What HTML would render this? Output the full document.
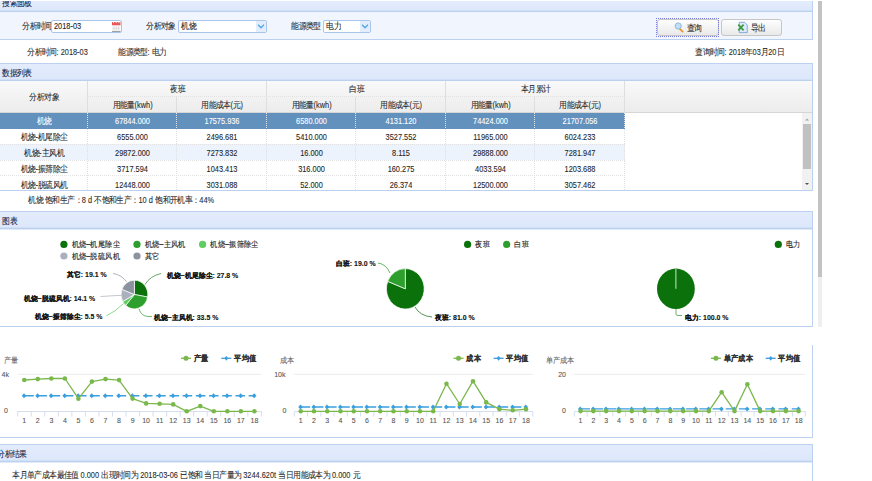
<!DOCTYPE html>
<html><head><meta charset="utf-8">
<style>
*{margin:0;padding:0;box-sizing:border-box}
html,body{width:872px;height:481px;overflow:hidden;background:#fff}
body{position:relative;font-family:"Liberation Sans",sans-serif;font-size:7.4px;color:#2a2a2a;-webkit-text-stroke:0.08px currentColor}
.a{position:absolute;white-space:nowrap;line-height:9px}
.hd{position:absolute;left:-1px;width:814px;height:18px;border:1px solid #bcd1f0;box-shadow:0 1px 0 rgba(188,209,240,.45),0 -1px 0 rgba(188,209,240,.35) inset;background:linear-gradient(#e3ecfc,#dce7fb)}
.hd span{transform:scaleY(1.15);position:absolute;left:2px;top:4.5px;font-size:7.4px;color:#10264d;font-weight:normal;line-height:9px}
.rb{position:absolute;left:812px;width:1px;background:#bcd1f0}
.bb{position:absolute;left:0;width:813px;height:1px;background:#bcd1f0}
.inp{position:absolute;height:13px;border:1px solid #a9c5ea;border-radius:2px;background:#fff}
.inp span{transform:scaleY(1.15);position:absolute;left:2px;top:1px;line-height:9px;color:#222}
.arr{position:absolute;right:0;top:0;width:10px;height:11px;background:#e4edfb;border-radius:0 2px 2px 0}
.btn{position:absolute;height:17px;border:1px solid #c6c6c6;border-radius:3px;background:linear-gradient(#fefefe,#e9e9e9)}
.vl{position:absolute;width:0;border-left:1px dotted #cdcdcd}
.hl{position:absolute;height:0;border-top:1px dotted #d0d0d0}
.c{position:absolute;text-align:center;line-height:9px;color:#2a2a2a;white-space:nowrap}
.tx{transform:scaleY(1.15)}
svg text{font-family:"Liberation Sans",sans-serif}
i{display:inline-block;width:1em;font-style:normal;text-align:center}
</style></head><body>
<div class="a" style="left:818px;top:1px;width:4px;height:276px;background:#c3c3c3"></div>
<div class="a" style="left:818px;top:277px;width:4px;height:50px;background:#efefef"></div>
<div class="hd" style="top:1px;height:11px;border-top:0;overflow:hidden"><span style="top:-2px"><i>搜</i><i>索</i><i>面</i><i>板</i></span></div>
<div class="a" style="left:0;top:12px;width:813px;height:28px;background:#f0f5fe;border-right:1px solid #bcd1f0;border-bottom:1px solid #bcd1f0"></div>
<div class="a tx" style="left:22px;top:22.3px"><i>分</i><i>析</i><i>时</i><i>间</i></div>
<div class="inp" style="left:51px;top:20px;width:71px"><span>2018-03</span></div>
<div class="a tx" style="left:146px;top:22.3px"><i>分</i><i>析</i><i>对</i><i>象</i></div>
<div class="inp" style="left:178px;top:20px;width:89px"><span><i>机</i><i>烧</i></span><div class="arr"></div></div>
<div class="a tx" style="left:291px;top:22.3px"><i>能</i><i>源</i><i>类</i><i>型</i></div>
<div class="inp" style="left:323px;top:20px;width:48px"><span><i>电</i><i>力</i></span><div class="arr"></div></div>
<div class="btn" style="left:657px;top:19px;width:62px"></div>
<div class="a" style="left:656px;top:18px;width:63px;height:19px;border:1px dotted #7b7be6"></div>
<div class="btn" style="left:721px;top:19px;width:61px"></div>
<div class="a tx" style="left:686.5px;top:24.3px"><i>查</i><i>询</i></div>
<div class="a tx" style="left:750.5px;top:24.3px"><i>导</i><i>出</i></div>
<svg class="a" style="left:111px;top:21px" width="11" height="12"><rect x="1" y="1" width="8.5" height="3.5" fill="#e8545a"/><rect x="1" y="4.5" width="8.5" height="5.5" fill="#f4f4f4"/><rect x="1" y="10" width="8.5" height="1" fill="#a0a0a0"/><path d="M3 5.5v4M5.25 5.5v4M7.5 5.5v4M1.5 7.3h7.5" stroke="#cfcfcf" stroke-width="0.5"/><circle cx="2.6" cy="1.6" r="0.6" fill="#fff"/><circle cx="5.2" cy="1.6" r="0.6" fill="#fff"/><circle cx="7.9" cy="1.6" r="0.6" fill="#fff"/></svg><svg class="a" style="left:257.2px;top:23px" width="8" height="7"><path d="M1,1.8 L4,4.8 L7,1.8" fill="none" stroke="#4ea6e6" stroke-width="1.3"/></svg><svg class="a" style="left:361px;top:23px" width="8" height="7"><path d="M1,1.8 L4,4.8 L7,1.8" fill="none" stroke="#4ea6e6" stroke-width="1.3"/></svg><svg class="a" style="left:673px;top:21px" width="13" height="13"><path d="M6.8,7.8 L9.6,10.6" stroke="#e59a2a" stroke-width="1.9" stroke-linecap="round"/><circle cx="5.2" cy="5" r="3.1" fill="#bfe0fa" stroke="#8cb3d6" stroke-width="0.9"/></svg><svg class="a" style="left:737px;top:21px" width="12" height="13"><path d="M2.3,1.3 H7.5 L10.3,4.1 V11.6 H2.3 Z" fill="#dce9fb" stroke="#6e9bd6" stroke-width="0.8"/><path d="M1.3,3.6 L6.6,9.4 M6.6,3.6 L1.3,9.4" stroke="#3f9a3f" stroke-width="1.7"/></svg><div class="a tx" style="left:27px;top:48px"><i>分</i><i>析</i><i>时</i><i>间</i>: 2018-03</div>
<div class="a tx" style="left:118px;top:48px"><i>能</i><i>源</i><i>类</i><i>型</i>: <i>电</i><i>力</i></div>
<div class="a tx" style="left:695px;top:48px"><i>查</i><i>询</i><i>时</i><i>间</i>: 2018<i>年</i>03<i>月</i>20<i>日</i></div>
<div class="hd" style="top:63px"><span><i>数</i><i>据</i><i>列</i><i>表</i></span></div>
<div class="rb" style="top:63px;height:128px"></div>
<div class="bb" style="top:190px"></div>
<div class="a" style="left:0;top:81px;width:812px;height:32px;background:linear-gradient(#f9f9f9,#ececec);border-bottom:1px solid #d6d6d6"></div>
<div class="a" style="left:0;top:113px;width:812px;height:77px;background:#fff;overflow:hidden"></div>
<div class="a" style="left:0;top:113.0px;width:625px;height:15.7px;background:#6291be"></div>
<div class="c tx" style="left:0px;top:116.9px;width:88px;color:#fff"><i>机</i><i>烧</i></div>
<div class="c tx" style="left:88px;top:116.9px;width:89px;color:#fff">67844.000</div>
<div class="c tx" style="left:177px;top:116.9px;width:90px;color:#fff">17575.936</div>
<div class="c tx" style="left:267px;top:116.9px;width:89px;color:#fff">6580.000</div>
<div class="c tx" style="left:356px;top:116.9px;width:90px;color:#fff">4131.120</div>
<div class="c tx" style="left:446px;top:116.9px;width:89px;color:#fff">74424.000</div>
<div class="c tx" style="left:535px;top:116.9px;width:90px;color:#fff">21707.056</div>
<div class="a" style="left:0;top:128.7px;width:625px;height:15.7px;background:#fff"></div>
<div class="c tx" style="left:0px;top:132.9px;width:88px;color:#1e1e1e"><i>机</i><i>烧</i>-<i>机</i><i>尾</i><i>除</i><i>尘</i></div>
<div class="c tx" style="left:88px;top:132.9px;width:89px;color:#1e1e1e">6555.000</div>
<div class="c tx" style="left:177px;top:132.9px;width:90px;color:#1e1e1e">2496.681</div>
<div class="c tx" style="left:267px;top:132.9px;width:89px;color:#1e1e1e">5410.000</div>
<div class="c tx" style="left:356px;top:132.9px;width:90px;color:#1e1e1e">3527.552</div>
<div class="c tx" style="left:446px;top:132.9px;width:89px;color:#1e1e1e">11965.000</div>
<div class="c tx" style="left:535px;top:132.9px;width:90px;color:#1e1e1e">6024.233</div>
<div class="a" style="left:0;top:144.4px;width:625px;height:15.7px;background:#edf3fc"></div>
<div class="hl" style="left:0;top:143.9px;width:625px;border-color:#e2e2e2"></div>
<div class="c tx" style="left:0px;top:148.9px;width:88px;color:#1e1e1e"><i>机</i><i>烧</i>-<i>主</i><i>风</i><i>机</i></div>
<div class="c tx" style="left:88px;top:148.9px;width:89px;color:#1e1e1e">29872.000</div>
<div class="c tx" style="left:177px;top:148.9px;width:90px;color:#1e1e1e">7273.832</div>
<div class="c tx" style="left:267px;top:148.9px;width:89px;color:#1e1e1e">16.000</div>
<div class="c tx" style="left:356px;top:148.9px;width:90px;color:#1e1e1e">8.115</div>
<div class="c tx" style="left:446px;top:148.9px;width:89px;color:#1e1e1e">29888.000</div>
<div class="c tx" style="left:535px;top:148.9px;width:90px;color:#1e1e1e">7281.947</div>
<div class="a" style="left:0;top:160.1px;width:625px;height:15.7px;background:#fff"></div>
<div class="hl" style="left:0;top:159.6px;width:625px;border-color:#e2e2e2"></div>
<div class="c tx" style="left:0px;top:164.9px;width:88px;color:#1e1e1e"><i>机</i><i>烧</i>-<i>振</i><i>筛</i><i>除</i><i>尘</i></div>
<div class="c tx" style="left:88px;top:164.9px;width:89px;color:#1e1e1e">3717.594</div>
<div class="c tx" style="left:177px;top:164.9px;width:90px;color:#1e1e1e">1043.413</div>
<div class="c tx" style="left:267px;top:164.9px;width:89px;color:#1e1e1e">316.000</div>
<div class="c tx" style="left:356px;top:164.9px;width:90px;color:#1e1e1e">160.275</div>
<div class="c tx" style="left:446px;top:164.9px;width:89px;color:#1e1e1e">4033.594</div>
<div class="c tx" style="left:535px;top:164.9px;width:90px;color:#1e1e1e">1203.688</div>
<div class="a" style="left:0;top:175.8px;width:625px;height:14.2px;background:#fff"></div>
<div class="hl" style="left:0;top:175.3px;width:625px;border-color:#e2e2e2"></div>
<div class="c tx" style="left:0px;top:180.9px;width:88px;color:#1e1e1e"><i>机</i><i>烧</i>-<i>脱</i><i>硫</i><i>风</i><i>机</i></div>
<div class="c tx" style="left:88px;top:180.9px;width:89px;color:#1e1e1e">12448.000</div>
<div class="c tx" style="left:177px;top:180.9px;width:90px;color:#1e1e1e">3031.088</div>
<div class="c tx" style="left:267px;top:180.9px;width:89px;color:#1e1e1e">52.000</div>
<div class="c tx" style="left:356px;top:180.9px;width:90px;color:#1e1e1e">26.374</div>
<div class="c tx" style="left:446px;top:180.9px;width:89px;color:#1e1e1e">12500.000</div>
<div class="c tx" style="left:535px;top:180.9px;width:90px;color:#1e1e1e">3057.462</div>
<div class="vl" style="left:87px;top:113px;height:77px;border-color:#e0e0e0"></div>
<div class="vl" style="left:176px;top:113px;height:77px;border-color:#e0e0e0"></div>
<div class="vl" style="left:266px;top:113px;height:77px;border-color:#e0e0e0"></div>
<div class="vl" style="left:355px;top:113px;height:77px;border-color:#e0e0e0"></div>
<div class="vl" style="left:445px;top:113px;height:77px;border-color:#e0e0e0"></div>
<div class="vl" style="left:534px;top:113px;height:77px;border-color:#e0e0e0"></div>
<div class="vl" style="left:624px;top:113px;height:77px;border-color:#e0e0e0"></div>
<div class="vl" style="left:87px;top:81px;height:32px;border-left-style:solid;border-color:#dedede"></div>
<div class="vl" style="left:176px;top:97px;height:16px;border-left-style:solid;border-color:#dedede"></div>
<div class="vl" style="left:266px;top:81px;height:32px;border-left-style:solid;border-color:#dedede"></div>
<div class="vl" style="left:355px;top:97px;height:16px;border-left-style:solid;border-color:#dedede"></div>
<div class="vl" style="left:445px;top:81px;height:32px;border-left-style:solid;border-color:#dedede"></div>
<div class="vl" style="left:534px;top:97px;height:16px;border-left-style:solid;border-color:#dedede"></div>
<div class="vl" style="left:624px;top:81px;height:32px;border-left-style:solid;border-color:#dedede"></div>
<div class="hl" style="left:88px;top:96px;width:537px;border-color:#e2e2e2"></div>
<div class="c tx" style="left:0;top:93px;width:88px"><i>分</i><i>析</i><i>对</i><i>象</i></div>
<div class="c tx" style="left:88px;top:85px;width:179px"><i>夜</i><i>班</i></div>
<div class="c tx" style="left:88px;top:101px;width:89px"><i>用</i><i>能</i><i>量</i>(kwh)</div>
<div class="c tx" style="left:177px;top:101px;width:90px"><i>用</i><i>能</i><i>成</i><i>本</i>(<i>元</i>)</div>
<div class="c tx" style="left:267px;top:85px;width:179px"><i>白</i><i>班</i></div>
<div class="c tx" style="left:267px;top:101px;width:89px"><i>用</i><i>能</i><i>量</i>(kwh)</div>
<div class="c tx" style="left:356px;top:101px;width:90px"><i>用</i><i>能</i><i>成</i><i>本</i>(<i>元</i>)</div>
<div class="c tx" style="left:446px;top:85px;width:179px"><i>本</i><i>月</i><i>累</i><i>计</i></div>
<div class="c tx" style="left:446px;top:101px;width:89px"><i>用</i><i>能</i><i>量</i>(kwh)</div>
<div class="c tx" style="left:535px;top:101px;width:90px"><i>用</i><i>能</i><i>成</i><i>本</i>(<i>元</i>)</div>
<div class="a" style="left:802px;top:113px;width:10px;height:77px;background:#f1f1f1"></div>
<div class="a" style="left:803px;top:124px;width:8px;height:45px;background:#c1c1c1"></div>
<svg class="a" style="left:802px;top:113px" width="10" height="77"><path d="M3 7.5 L5 5.5 L7 7.5Z" fill="#a3a3a3"/><path d="M3 70 L5 72 L7 70Z" fill="#505050"/></svg>
<div class="a tx" style="left:28px;top:196px"><i>机</i><i>烧</i> <i>饱</i><i>和</i><i>生</i><i>产</i><i>：</i>8 d <i>不</i><i>饱</i><i>和</i><i>生</i><i>产</i><i>：</i>10 d <i>饱</i><i>和</i><i>开</i><i>机</i><i>率</i><i>：</i>44%</div>
<div class="hd" style="top:211px"><span><i>图</i><i>表</i></span></div>
<div class="rb" style="top:211px;height:116px"></div>
<div class="bb" style="top:326px"></div>
<div class="rb" style="top:345px;height:93px"></div>
<div class="bb" style="top:437px"></div>
<div class="hd" style="top:444px"><span style="left:-3px"><i>分</i><i>析</i><i>结</i><i>果</i></span></div>
<div class="rb" style="top:444px;height:40px"></div>
<div class="a tx" style="left:12px;top:471px"><i>本</i><i>月</i><i>单</i><i>产</i><i>成</i><i>本</i><i>最</i><i>佳</i><i>值</i> 0.000 <i>出</i><i>现</i><i>时</i><i>间</i><i>为</i> 2018-03-06 <i>已</i><i>饱</i><i>和</i> <i>当</i><i>日</i><i>产</i><i>量</i><i>为</i> 3244.620t <i>当</i><i>日</i><i>用</i><i>能</i><i>成</i><i>本</i><i>为</i> 0.000 <i>元</i></div>
<svg class="a" style="left:0;top:0" width="872" height="481" viewBox="0 0 872 481"><path d="M134.4,294.5 L134.40,280.20 A13.4,14.3 0 0 1 147.59,297.00 Z" fill="#0b720b" stroke="#fff" stroke-width="0.7" stroke-linejoin="round"/><path d="M134.4,294.5 L147.59,297.00 A13.4,14.3 0 0 1 125.67,305.34 Z" fill="#2c9f2c" stroke="#fff" stroke-width="0.7" stroke-linejoin="round"/><path d="M134.4,294.5 L125.67,305.34 A13.4,14.3 0 0 1 122.74,301.55 Z" fill="#5fcd5f" stroke="#fff" stroke-width="0.7" stroke-linejoin="round"/><path d="M134.4,294.5 L122.74,301.55 A13.4,14.3 0 0 1 121.91,289.32 Z" fill="#aab0bc" stroke="#fff" stroke-width="0.7" stroke-linejoin="round"/><path d="M134.4,294.5 L121.91,289.32 A13.4,14.3 0 0 1 134.40,280.20 Z" fill="#8c929e" stroke="#fff" stroke-width="0.7" stroke-linejoin="round"/><path d="M405.3,288.8 L405.30,268.60 A18.9,20.2 0 1 1 387.73,281.36 Z" fill="#0b720b" stroke="#fff" stroke-width="0.7" stroke-linejoin="round"/><path d="M405.3,288.8 L387.73,281.36 A18.9,20.2 0 0 1 405.30,268.60 Z" fill="#2c9f2c" stroke="#fff" stroke-width="0.7" stroke-linejoin="round"/><ellipse cx="675.9" cy="288.8" rx="18.9" ry="20.2" fill="#0b720b"/><line x1="675.9" y1="288.8" x2="675.9" y2="269" stroke="#fff" stroke-width="0.8"/><path d="M145,284.5 Q150,276 161,273.5" fill="none" stroke="#3f8f3f" stroke-width="0.8"/><path d="M139,308.8 Q141,316 148,316.5 L152,316.5" fill="none" stroke="#4aa84a" stroke-width="0.8"/><path d="M123.5,303.5 Q115,312 106.5,315.7" fill="none" stroke="#6fd06f" stroke-width="0.8"/><path d="M121,295.3 L100.5,296.5" fill="none" stroke="#b4b8c2" stroke-width="0.8"/><path d="M126.5,281.8 Q122,275 113,273.5" fill="none" stroke="#9aa0aa" stroke-width="0.8"/><path d="M390,273 Q386,264 378,263" fill="none" stroke="#3aa53a" stroke-width="0.8"/><path d="M415,307 Q420,316 432,317" fill="none" stroke="#2a7a2a" stroke-width="0.8"/><path d="M676,309 L676,314 Q676,315.5 678,315.5 L682,315.5" fill="none" stroke="#4a9a4a" stroke-width="0.8"/><circle cx="63.9" cy="244.4" r="3.6" fill="#0b720b"/><circle cx="137" cy="244.4" r="3.6" fill="#2c9f2c"/><circle cx="202.6" cy="244.4" r="3.6" fill="#5fcd5f"/><circle cx="63.9" cy="256" r="3.6" fill="#aab0bc"/><circle cx="137" cy="256" r="3.6" fill="#8c929e"/><circle cx="467.6" cy="244.4" r="3.6" fill="#0b720b"/><circle cx="506.7" cy="244.4" r="3.6" fill="#2c9f2c"/><circle cx="778.3" cy="244.4" r="3.6" fill="#0b720b"/><line x1="17.7" y1="374.3" x2="261.4" y2="374.3" stroke="#e6e6e6" stroke-width="0.8"/><line x1="17.7" y1="411.5" x2="261.4" y2="411.5" stroke="#ccd6eb" stroke-width="0.8"/><line x1="17.70" y1="411.5" x2="17.70" y2="416.5" stroke="#ccd6eb" stroke-width="0.8"/><line x1="31.24" y1="411.5" x2="31.24" y2="416.5" stroke="#ccd6eb" stroke-width="0.8"/><line x1="44.78" y1="411.5" x2="44.78" y2="416.5" stroke="#ccd6eb" stroke-width="0.8"/><line x1="58.32" y1="411.5" x2="58.32" y2="416.5" stroke="#ccd6eb" stroke-width="0.8"/><line x1="71.86" y1="411.5" x2="71.86" y2="416.5" stroke="#ccd6eb" stroke-width="0.8"/><line x1="85.39" y1="411.5" x2="85.39" y2="416.5" stroke="#ccd6eb" stroke-width="0.8"/><line x1="98.93" y1="411.5" x2="98.93" y2="416.5" stroke="#ccd6eb" stroke-width="0.8"/><line x1="112.47" y1="411.5" x2="112.47" y2="416.5" stroke="#ccd6eb" stroke-width="0.8"/><line x1="126.01" y1="411.5" x2="126.01" y2="416.5" stroke="#ccd6eb" stroke-width="0.8"/><line x1="139.55" y1="411.5" x2="139.55" y2="416.5" stroke="#ccd6eb" stroke-width="0.8"/><line x1="153.09" y1="411.5" x2="153.09" y2="416.5" stroke="#ccd6eb" stroke-width="0.8"/><line x1="166.63" y1="411.5" x2="166.63" y2="416.5" stroke="#ccd6eb" stroke-width="0.8"/><line x1="180.17" y1="411.5" x2="180.17" y2="416.5" stroke="#ccd6eb" stroke-width="0.8"/><line x1="193.71" y1="411.5" x2="193.71" y2="416.5" stroke="#ccd6eb" stroke-width="0.8"/><line x1="207.24" y1="411.5" x2="207.24" y2="416.5" stroke="#ccd6eb" stroke-width="0.8"/><line x1="220.78" y1="411.5" x2="220.78" y2="416.5" stroke="#ccd6eb" stroke-width="0.8"/><line x1="234.32" y1="411.5" x2="234.32" y2="416.5" stroke="#ccd6eb" stroke-width="0.8"/><line x1="247.86" y1="411.5" x2="247.86" y2="416.5" stroke="#ccd6eb" stroke-width="0.8"/><line x1="261.40" y1="411.5" x2="261.40" y2="416.5" stroke="#ccd6eb" stroke-width="0.8"/><line x1="24.27" y1="395.8" x2="254.43" y2="395.8" stroke="#3a9fdf" stroke-width="1.4" stroke-dasharray="9.5,3.7"/><path d="M23.97,393.3 L26.37,395.8 L23.97,398.3 L21.77,395.8Z" fill="#3a9fdf"/><path d="M37.51,393.3 L39.91,395.8 L37.51,398.3 L35.31,395.8Z" fill="#3a9fdf"/><path d="M51.05,393.3 L53.45,395.8 L51.05,398.3 L48.85,395.8Z" fill="#3a9fdf"/><path d="M64.59,393.3 L66.99,395.8 L64.59,398.3 L62.39,395.8Z" fill="#3a9fdf"/><path d="M78.12,393.3 L80.52,395.8 L78.12,398.3 L75.92,395.8Z" fill="#3a9fdf"/><path d="M91.66,393.3 L94.06,395.8 L91.66,398.3 L89.46,395.8Z" fill="#3a9fdf"/><path d="M105.20,393.3 L107.60,395.8 L105.20,398.3 L103.00,395.8Z" fill="#3a9fdf"/><path d="M118.74,393.3 L121.14,395.8 L118.74,398.3 L116.54,395.8Z" fill="#3a9fdf"/><path d="M132.28,393.3 L134.68,395.8 L132.28,398.3 L130.08,395.8Z" fill="#3a9fdf"/><path d="M145.82,393.3 L148.22,395.8 L145.82,398.3 L143.62,395.8Z" fill="#3a9fdf"/><path d="M159.36,393.3 L161.76,395.8 L159.36,398.3 L157.16,395.8Z" fill="#3a9fdf"/><path d="M172.90,393.3 L175.30,395.8 L172.90,398.3 L170.70,395.8Z" fill="#3a9fdf"/><path d="M186.44,393.3 L188.84,395.8 L186.44,398.3 L184.24,395.8Z" fill="#3a9fdf"/><path d="M199.97,393.3 L202.37,395.8 L199.97,398.3 L197.77,395.8Z" fill="#3a9fdf"/><path d="M213.51,393.3 L215.91,395.8 L213.51,398.3 L211.31,395.8Z" fill="#3a9fdf"/><path d="M227.05,393.3 L229.45,395.8 L227.05,398.3 L224.85,395.8Z" fill="#3a9fdf"/><path d="M240.59,393.3 L242.99,395.8 L240.59,398.3 L238.39,395.8Z" fill="#3a9fdf"/><path d="M254.13,393.3 L256.53,395.8 L254.13,398.3 L251.93,395.8Z" fill="#3a9fdf"/><polyline points="24.27,380 37.81,379.1 51.35,378.5 64.89,378.5 78.42,398.7 91.96,381.6 105.50,379.1 119.04,380.1 132.58,398.6 146.12,403.4 159.66,403.8 173.20,404.4 186.74,411.3 200.27,406.1 213.81,411.3 227.35,411.3 240.89,411.3 254.43,411.3" fill="none" stroke="#7ab84c" stroke-width="1.3" stroke-linejoin="round"/><circle cx="24.27" cy="380" r="2.3" fill="#7ab84c"/><circle cx="37.81" cy="379.1" r="2.3" fill="#7ab84c"/><circle cx="51.35" cy="378.5" r="2.3" fill="#7ab84c"/><circle cx="64.89" cy="378.5" r="2.3" fill="#7ab84c"/><circle cx="78.42" cy="398.7" r="2.3" fill="#7ab84c"/><circle cx="91.96" cy="381.6" r="2.3" fill="#7ab84c"/><circle cx="105.50" cy="379.1" r="2.3" fill="#7ab84c"/><circle cx="119.04" cy="380.1" r="2.3" fill="#7ab84c"/><circle cx="132.58" cy="398.6" r="2.3" fill="#7ab84c"/><circle cx="146.12" cy="403.4" r="2.3" fill="#7ab84c"/><circle cx="159.66" cy="403.8" r="2.3" fill="#7ab84c"/><circle cx="173.20" cy="404.4" r="2.3" fill="#7ab84c"/><circle cx="186.74" cy="411.3" r="2.3" fill="#7ab84c"/><circle cx="200.27" cy="406.1" r="2.3" fill="#7ab84c"/><circle cx="213.81" cy="411.3" r="2.3" fill="#7ab84c"/><circle cx="227.35" cy="411.3" r="2.3" fill="#7ab84c"/><circle cx="240.89" cy="411.3" r="2.3" fill="#7ab84c"/><circle cx="254.43" cy="411.3" r="2.3" fill="#7ab84c"/><line x1="181" y1="358.3" x2="191" y2="358.3" stroke="#7ab84c" stroke-width="1.3"/><circle cx="186" cy="358.3" r="2.5" fill="#7ab84c"/><line x1="221.3" y1="358.3" x2="231.3" y2="358.3" stroke="#3a9fdf" stroke-width="1.3"/><path d="M226.3,355.90000000000003 L228.3,358.3 L226.3,360.7 L224.3,358.3Z" fill="#3a9fdf"/><line x1="294.3" y1="374.3" x2="532.8" y2="374.3" stroke="#e6e6e6" stroke-width="0.8"/><line x1="294.3" y1="411.5" x2="532.8" y2="411.5" stroke="#ccd6eb" stroke-width="0.8"/><line x1="294.30" y1="411.5" x2="294.30" y2="416.5" stroke="#ccd6eb" stroke-width="0.8"/><line x1="307.55" y1="411.5" x2="307.55" y2="416.5" stroke="#ccd6eb" stroke-width="0.8"/><line x1="320.80" y1="411.5" x2="320.80" y2="416.5" stroke="#ccd6eb" stroke-width="0.8"/><line x1="334.05" y1="411.5" x2="334.05" y2="416.5" stroke="#ccd6eb" stroke-width="0.8"/><line x1="347.30" y1="411.5" x2="347.30" y2="416.5" stroke="#ccd6eb" stroke-width="0.8"/><line x1="360.55" y1="411.5" x2="360.55" y2="416.5" stroke="#ccd6eb" stroke-width="0.8"/><line x1="373.80" y1="411.5" x2="373.80" y2="416.5" stroke="#ccd6eb" stroke-width="0.8"/><line x1="387.05" y1="411.5" x2="387.05" y2="416.5" stroke="#ccd6eb" stroke-width="0.8"/><line x1="400.30" y1="411.5" x2="400.30" y2="416.5" stroke="#ccd6eb" stroke-width="0.8"/><line x1="413.55" y1="411.5" x2="413.55" y2="416.5" stroke="#ccd6eb" stroke-width="0.8"/><line x1="426.80" y1="411.5" x2="426.80" y2="416.5" stroke="#ccd6eb" stroke-width="0.8"/><line x1="440.05" y1="411.5" x2="440.05" y2="416.5" stroke="#ccd6eb" stroke-width="0.8"/><line x1="453.30" y1="411.5" x2="453.30" y2="416.5" stroke="#ccd6eb" stroke-width="0.8"/><line x1="466.55" y1="411.5" x2="466.55" y2="416.5" stroke="#ccd6eb" stroke-width="0.8"/><line x1="479.80" y1="411.5" x2="479.80" y2="416.5" stroke="#ccd6eb" stroke-width="0.8"/><line x1="493.05" y1="411.5" x2="493.05" y2="416.5" stroke="#ccd6eb" stroke-width="0.8"/><line x1="506.30" y1="411.5" x2="506.30" y2="416.5" stroke="#ccd6eb" stroke-width="0.8"/><line x1="519.55" y1="411.5" x2="519.55" y2="416.5" stroke="#ccd6eb" stroke-width="0.8"/><line x1="532.80" y1="411.5" x2="532.80" y2="416.5" stroke="#ccd6eb" stroke-width="0.8"/><line x1="300.73" y1="407" x2="525.97" y2="407" stroke="#3a9fdf" stroke-width="1.4" stroke-dasharray="9.5,3.7"/><path d="M300.43,404.5 L302.83,407 L300.43,409.5 L298.23,407Z" fill="#3a9fdf"/><path d="M313.68,404.5 L316.08,407 L313.68,409.5 L311.48,407Z" fill="#3a9fdf"/><path d="M326.93,404.5 L329.33,407 L326.93,409.5 L324.73,407Z" fill="#3a9fdf"/><path d="M340.18,404.5 L342.58,407 L340.18,409.5 L337.98,407Z" fill="#3a9fdf"/><path d="M353.43,404.5 L355.83,407 L353.43,409.5 L351.23,407Z" fill="#3a9fdf"/><path d="M366.68,404.5 L369.08,407 L366.68,409.5 L364.48,407Z" fill="#3a9fdf"/><path d="M379.92,404.5 L382.32,407 L379.92,409.5 L377.72,407Z" fill="#3a9fdf"/><path d="M393.17,404.5 L395.57,407 L393.17,409.5 L390.97,407Z" fill="#3a9fdf"/><path d="M406.42,404.5 L408.82,407 L406.42,409.5 L404.22,407Z" fill="#3a9fdf"/><path d="M419.67,404.5 L422.07,407 L419.67,409.5 L417.47,407Z" fill="#3a9fdf"/><path d="M432.92,404.5 L435.32,407 L432.92,409.5 L430.72,407Z" fill="#3a9fdf"/><path d="M446.17,404.5 L448.57,407 L446.17,409.5 L443.97,407Z" fill="#3a9fdf"/><path d="M459.42,404.5 L461.82,407 L459.42,409.5 L457.22,407Z" fill="#3a9fdf"/><path d="M472.67,404.5 L475.07,407 L472.67,409.5 L470.47,407Z" fill="#3a9fdf"/><path d="M485.92,404.5 L488.32,407 L485.92,409.5 L483.72,407Z" fill="#3a9fdf"/><path d="M499.17,404.5 L501.57,407 L499.17,409.5 L496.97,407Z" fill="#3a9fdf"/><path d="M512.42,404.5 L514.82,407 L512.42,409.5 L510.22,407Z" fill="#3a9fdf"/><path d="M525.67,404.5 L528.07,407 L525.67,409.5 L523.47,407Z" fill="#3a9fdf"/><polyline points="300.73,411.3 313.98,411.3 327.23,411.3 340.48,411.3 353.73,411.3 366.98,411.3 380.22,411.3 393.47,411.3 406.72,411.3 419.97,411.3 433.22,411.3 446.47,383.7 459.72,404 472.97,381.2 486.22,402.4 499.47,409.2 512.72,410.3 525.97,409.2" fill="none" stroke="#7ab84c" stroke-width="1.3" stroke-linejoin="round"/><circle cx="300.73" cy="411.3" r="2.3" fill="#7ab84c"/><circle cx="313.98" cy="411.3" r="2.3" fill="#7ab84c"/><circle cx="327.23" cy="411.3" r="2.3" fill="#7ab84c"/><circle cx="340.48" cy="411.3" r="2.3" fill="#7ab84c"/><circle cx="353.73" cy="411.3" r="2.3" fill="#7ab84c"/><circle cx="366.98" cy="411.3" r="2.3" fill="#7ab84c"/><circle cx="380.22" cy="411.3" r="2.3" fill="#7ab84c"/><circle cx="393.47" cy="411.3" r="2.3" fill="#7ab84c"/><circle cx="406.72" cy="411.3" r="2.3" fill="#7ab84c"/><circle cx="419.97" cy="411.3" r="2.3" fill="#7ab84c"/><circle cx="433.22" cy="411.3" r="2.3" fill="#7ab84c"/><circle cx="446.47" cy="383.7" r="2.3" fill="#7ab84c"/><circle cx="459.72" cy="404" r="2.3" fill="#7ab84c"/><circle cx="472.97" cy="381.2" r="2.3" fill="#7ab84c"/><circle cx="486.22" cy="402.4" r="2.3" fill="#7ab84c"/><circle cx="499.47" cy="409.2" r="2.3" fill="#7ab84c"/><circle cx="512.72" cy="410.3" r="2.3" fill="#7ab84c"/><circle cx="525.97" cy="409.2" r="2.3" fill="#7ab84c"/><line x1="453.5" y1="358.3" x2="463.5" y2="358.3" stroke="#7ab84c" stroke-width="1.3"/><circle cx="458.5" cy="358.3" r="2.5" fill="#7ab84c"/><line x1="493.6" y1="358.3" x2="503.6" y2="358.3" stroke="#3a9fdf" stroke-width="1.3"/><path d="M498.6,355.90000000000003 L500.6,358.3 L498.6,360.7 L496.6,358.3Z" fill="#3a9fdf"/><line x1="574.3" y1="374.3" x2="805.3" y2="374.3" stroke="#e6e6e6" stroke-width="0.8"/><line x1="574.3" y1="411.5" x2="805.3" y2="411.5" stroke="#ccd6eb" stroke-width="0.8"/><line x1="574.30" y1="411.5" x2="574.30" y2="416.5" stroke="#ccd6eb" stroke-width="0.8"/><line x1="587.13" y1="411.5" x2="587.13" y2="416.5" stroke="#ccd6eb" stroke-width="0.8"/><line x1="599.97" y1="411.5" x2="599.97" y2="416.5" stroke="#ccd6eb" stroke-width="0.8"/><line x1="612.80" y1="411.5" x2="612.80" y2="416.5" stroke="#ccd6eb" stroke-width="0.8"/><line x1="625.63" y1="411.5" x2="625.63" y2="416.5" stroke="#ccd6eb" stroke-width="0.8"/><line x1="638.47" y1="411.5" x2="638.47" y2="416.5" stroke="#ccd6eb" stroke-width="0.8"/><line x1="651.30" y1="411.5" x2="651.30" y2="416.5" stroke="#ccd6eb" stroke-width="0.8"/><line x1="664.13" y1="411.5" x2="664.13" y2="416.5" stroke="#ccd6eb" stroke-width="0.8"/><line x1="676.97" y1="411.5" x2="676.97" y2="416.5" stroke="#ccd6eb" stroke-width="0.8"/><line x1="689.80" y1="411.5" x2="689.80" y2="416.5" stroke="#ccd6eb" stroke-width="0.8"/><line x1="702.63" y1="411.5" x2="702.63" y2="416.5" stroke="#ccd6eb" stroke-width="0.8"/><line x1="715.47" y1="411.5" x2="715.47" y2="416.5" stroke="#ccd6eb" stroke-width="0.8"/><line x1="728.30" y1="411.5" x2="728.30" y2="416.5" stroke="#ccd6eb" stroke-width="0.8"/><line x1="741.13" y1="411.5" x2="741.13" y2="416.5" stroke="#ccd6eb" stroke-width="0.8"/><line x1="753.97" y1="411.5" x2="753.97" y2="416.5" stroke="#ccd6eb" stroke-width="0.8"/><line x1="766.80" y1="411.5" x2="766.80" y2="416.5" stroke="#ccd6eb" stroke-width="0.8"/><line x1="779.63" y1="411.5" x2="779.63" y2="416.5" stroke="#ccd6eb" stroke-width="0.8"/><line x1="792.47" y1="411.5" x2="792.47" y2="416.5" stroke="#ccd6eb" stroke-width="0.8"/><line x1="805.30" y1="411.5" x2="805.30" y2="416.5" stroke="#ccd6eb" stroke-width="0.8"/><line x1="580.52" y1="408.9" x2="798.68" y2="408.9" stroke="#3a9fdf" stroke-width="1.4" stroke-dasharray="9.5,3.7"/><path d="M580.22,406.4 L582.62,408.9 L580.22,411.4 L578.02,408.9Z" fill="#3a9fdf"/><path d="M593.05,406.4 L595.45,408.9 L593.05,411.4 L590.85,408.9Z" fill="#3a9fdf"/><path d="M605.88,406.4 L608.28,408.9 L605.88,411.4 L603.68,408.9Z" fill="#3a9fdf"/><path d="M618.72,406.4 L621.12,408.9 L618.72,411.4 L616.52,408.9Z" fill="#3a9fdf"/><path d="M631.55,406.4 L633.95,408.9 L631.55,411.4 L629.35,408.9Z" fill="#3a9fdf"/><path d="M644.38,406.4 L646.78,408.9 L644.38,411.4 L642.18,408.9Z" fill="#3a9fdf"/><path d="M657.22,406.4 L659.62,408.9 L657.22,411.4 L655.02,408.9Z" fill="#3a9fdf"/><path d="M670.05,406.4 L672.45,408.9 L670.05,411.4 L667.85,408.9Z" fill="#3a9fdf"/><path d="M682.88,406.4 L685.28,408.9 L682.88,411.4 L680.68,408.9Z" fill="#3a9fdf"/><path d="M695.72,406.4 L698.12,408.9 L695.72,411.4 L693.52,408.9Z" fill="#3a9fdf"/><path d="M708.55,406.4 L710.95,408.9 L708.55,411.4 L706.35,408.9Z" fill="#3a9fdf"/><path d="M721.38,406.4 L723.78,408.9 L721.38,411.4 L719.18,408.9Z" fill="#3a9fdf"/><path d="M734.22,406.4 L736.62,408.9 L734.22,411.4 L732.02,408.9Z" fill="#3a9fdf"/><path d="M747.05,406.4 L749.45,408.9 L747.05,411.4 L744.85,408.9Z" fill="#3a9fdf"/><path d="M759.88,406.4 L762.28,408.9 L759.88,411.4 L757.68,408.9Z" fill="#3a9fdf"/><path d="M772.72,406.4 L775.12,408.9 L772.72,411.4 L770.52,408.9Z" fill="#3a9fdf"/><path d="M785.55,406.4 L787.95,408.9 L785.55,411.4 L783.35,408.9Z" fill="#3a9fdf"/><path d="M798.38,406.4 L800.78,408.9 L798.38,411.4 L796.18,408.9Z" fill="#3a9fdf"/><polyline points="580.52,411.1 593.35,411.1 606.18,411.1 619.02,411.1 631.85,411.1 644.68,411.1 657.52,411.1 670.35,411.1 683.18,411.1 696.02,411.1 708.85,411.1 721.68,392.2 734.52,411.1 747.35,384.2 760.18,411.1 773.02,411.1 785.85,411.1 798.68,411.1" fill="none" stroke="#7ab84c" stroke-width="1.3" stroke-linejoin="round"/><circle cx="580.52" cy="411.1" r="2.3" fill="#7ab84c"/><circle cx="593.35" cy="411.1" r="2.3" fill="#7ab84c"/><circle cx="606.18" cy="411.1" r="2.3" fill="#7ab84c"/><circle cx="619.02" cy="411.1" r="2.3" fill="#7ab84c"/><circle cx="631.85" cy="411.1" r="2.3" fill="#7ab84c"/><circle cx="644.68" cy="411.1" r="2.3" fill="#7ab84c"/><circle cx="657.52" cy="411.1" r="2.3" fill="#7ab84c"/><circle cx="670.35" cy="411.1" r="2.3" fill="#7ab84c"/><circle cx="683.18" cy="411.1" r="2.3" fill="#7ab84c"/><circle cx="696.02" cy="411.1" r="2.3" fill="#7ab84c"/><circle cx="708.85" cy="411.1" r="2.3" fill="#7ab84c"/><circle cx="721.68" cy="392.2" r="2.3" fill="#7ab84c"/><circle cx="734.52" cy="411.1" r="2.3" fill="#7ab84c"/><circle cx="747.35" cy="384.2" r="2.3" fill="#7ab84c"/><circle cx="760.18" cy="411.1" r="2.3" fill="#7ab84c"/><circle cx="773.02" cy="411.1" r="2.3" fill="#7ab84c"/><circle cx="785.85" cy="411.1" r="2.3" fill="#7ab84c"/><circle cx="798.68" cy="411.1" r="2.3" fill="#7ab84c"/><line x1="710.9" y1="358.3" x2="720.9" y2="358.3" stroke="#7ab84c" stroke-width="1.3"/><circle cx="715.9" cy="358.3" r="2.5" fill="#7ab84c"/><line x1="765.7" y1="358.3" x2="775.7" y2="358.3" stroke="#3a9fdf" stroke-width="1.3"/><path d="M770.7,355.90000000000003 L772.7,358.3 L770.7,360.7 L768.7,358.3Z" fill="#3a9fdf"/></svg>
<div class="a" style="left:66.70px;top:270.17px;font-size:7.3px;font-weight:bold;color:#111;transform:scale(0.95,0.98);transform-origin:0 4.43px;-webkit-text-stroke:0.1px currentColor"><i>其</i><i>它</i>: 19.1 %</div>
<div class="a" style="left:167.30px;top:270.77px;font-size:7.3px;font-weight:bold;color:#111;transform:scale(0.95,0.98);transform-origin:0 4.43px;-webkit-text-stroke:0.1px currentColor"><i>机</i><i>烧</i>–<i>机</i><i>尾</i><i>除</i><i>尘</i>: 27.8 %</div>
<div class="a" style="left:23.80px;top:294.17px;font-size:7.3px;font-weight:bold;color:#111;transform:scale(0.95,0.98);transform-origin:0 4.43px;-webkit-text-stroke:0.1px currentColor"><i>机</i><i>烧</i>–<i>脱</i><i>硫</i><i>风</i><i>机</i>: 14.1 %</div>
<div class="a" style="left:34.70px;top:312.37px;font-size:7.3px;font-weight:bold;color:#111;transform:scale(0.95,0.98);transform-origin:0 4.43px;-webkit-text-stroke:0.1px currentColor"><i>机</i><i>烧</i>–<i>振</i><i>筛</i><i>除</i><i>尘</i>: 5.5 %</div>
<div class="a" style="left:154.00px;top:312.67px;font-size:7.3px;font-weight:bold;color:#111;transform:scale(0.95,0.98);transform-origin:0 4.43px;-webkit-text-stroke:0.1px currentColor"><i>机</i><i>烧</i>–<i>主</i><i>风</i><i>机</i>: 33.5 %</div>
<div class="a" style="left:335.60px;top:258.97px;font-size:7.3px;font-weight:bold;color:#111;transform:scale(0.95,0.98);transform-origin:0 4.43px;-webkit-text-stroke:0.1px currentColor"><i>白</i><i>班</i>: 19.0 %</div>
<div class="a" style="left:434.80px;top:312.67px;font-size:7.3px;font-weight:bold;color:#111;transform:scale(0.95,0.98);transform-origin:0 4.43px;-webkit-text-stroke:0.1px currentColor"><i>夜</i><i>班</i>: 81.0 %</div>
<div class="a" style="left:685.00px;top:312.67px;font-size:7.3px;font-weight:bold;color:#111;transform:scale(0.95,0.98);transform-origin:0 4.43px;-webkit-text-stroke:0.1px currentColor"><i>电</i><i>力</i>: 100.0 %</div>
<div class="a" style="left:71.40px;top:240.04px;font-size:7.4px;font-weight:normal;color:#1e1e1e;transform:scale(1.0,1.12);transform-origin:0 4.46px;-webkit-text-stroke:0.12px currentColor"><i>机</i><i>烧</i>–<i>机</i><i>尾</i><i>除</i><i>尘</i></div>
<div class="a" style="left:144.50px;top:240.04px;font-size:7.4px;font-weight:normal;color:#1e1e1e;transform:scale(1.0,1.12);transform-origin:0 4.46px;-webkit-text-stroke:0.12px currentColor"><i>机</i><i>烧</i>–<i>主</i><i>风</i><i>机</i></div>
<div class="a" style="left:210.10px;top:240.04px;font-size:7.4px;font-weight:normal;color:#1e1e1e;transform:scale(1.0,1.12);transform-origin:0 4.46px;-webkit-text-stroke:0.12px currentColor"><i>机</i><i>烧</i>–<i>振</i><i>筛</i><i>除</i><i>尘</i></div>
<div class="a" style="left:71.40px;top:251.64px;font-size:7.4px;font-weight:normal;color:#1e1e1e;transform:scale(1.0,1.12);transform-origin:0 4.46px;-webkit-text-stroke:0.12px currentColor"><i>机</i><i>烧</i>–<i>脱</i><i>硫</i><i>风</i><i>机</i></div>
<div class="a" style="left:144.50px;top:251.64px;font-size:7.4px;font-weight:normal;color:#1e1e1e;transform:scale(1.0,1.12);transform-origin:0 4.46px;-webkit-text-stroke:0.12px currentColor"><i>其</i><i>它</i></div>
<div class="a" style="left:475.10px;top:240.04px;font-size:7.4px;font-weight:normal;color:#1e1e1e;transform:scale(1.0,1.12);transform-origin:0 4.46px;-webkit-text-stroke:0.12px currentColor"><i>夜</i><i>班</i></div>
<div class="a" style="left:514.20px;top:240.04px;font-size:7.4px;font-weight:normal;color:#1e1e1e;transform:scale(1.0,1.12);transform-origin:0 4.46px;-webkit-text-stroke:0.12px currentColor"><i>白</i><i>班</i></div>
<div class="a" style="left:785.80px;top:240.04px;font-size:7.4px;font-weight:normal;color:#1e1e1e;transform:scale(1.0,1.12);transform-origin:0 4.46px;-webkit-text-stroke:0.12px currentColor"><i>电</i><i>力</i></div>
<div class="a" style="left:-25.73px;width:100px;text-align:center;top:415.77px;font-size:7px;font-weight:normal;color:#555;transform:scale(1.0,1.12);transform-origin:0 4.33px">1</div>
<div class="a" style="left:-12.19px;width:100px;text-align:center;top:415.77px;font-size:7px;font-weight:normal;color:#555;transform:scale(1.0,1.12);transform-origin:0 4.33px">2</div>
<div class="a" style="left:1.35px;width:100px;text-align:center;top:415.77px;font-size:7px;font-weight:normal;color:#555;transform:scale(1.0,1.12);transform-origin:0 4.33px">3</div>
<div class="a" style="left:14.89px;width:100px;text-align:center;top:415.77px;font-size:7px;font-weight:normal;color:#555;transform:scale(1.0,1.12);transform-origin:0 4.33px">4</div>
<div class="a" style="left:28.42px;width:100px;text-align:center;top:415.77px;font-size:7px;font-weight:normal;color:#555;transform:scale(1.0,1.12);transform-origin:0 4.33px">5</div>
<div class="a" style="left:41.96px;width:100px;text-align:center;top:415.77px;font-size:7px;font-weight:normal;color:#555;transform:scale(1.0,1.12);transform-origin:0 4.33px">6</div>
<div class="a" style="left:55.50px;width:100px;text-align:center;top:415.77px;font-size:7px;font-weight:normal;color:#555;transform:scale(1.0,1.12);transform-origin:0 4.33px">7</div>
<div class="a" style="left:69.04px;width:100px;text-align:center;top:415.77px;font-size:7px;font-weight:normal;color:#555;transform:scale(1.0,1.12);transform-origin:0 4.33px">8</div>
<div class="a" style="left:82.58px;width:100px;text-align:center;top:415.77px;font-size:7px;font-weight:normal;color:#555;transform:scale(1.0,1.12);transform-origin:0 4.33px">9</div>
<div class="a" style="left:96.12px;width:100px;text-align:center;top:415.77px;font-size:7px;font-weight:normal;color:#555;transform:scale(1.0,1.12);transform-origin:0 4.33px">10</div>
<div class="a" style="left:109.66px;width:100px;text-align:center;top:415.77px;font-size:7px;font-weight:normal;color:#555;transform:scale(1.0,1.12);transform-origin:0 4.33px">11</div>
<div class="a" style="left:123.20px;width:100px;text-align:center;top:415.77px;font-size:7px;font-weight:normal;color:#555;transform:scale(1.0,1.12);transform-origin:0 4.33px">12</div>
<div class="a" style="left:136.74px;width:100px;text-align:center;top:415.77px;font-size:7px;font-weight:normal;color:#555;transform:scale(1.0,1.12);transform-origin:0 4.33px">13</div>
<div class="a" style="left:150.27px;width:100px;text-align:center;top:415.77px;font-size:7px;font-weight:normal;color:#555;transform:scale(1.0,1.12);transform-origin:0 4.33px">14</div>
<div class="a" style="left:163.81px;width:100px;text-align:center;top:415.77px;font-size:7px;font-weight:normal;color:#555;transform:scale(1.0,1.12);transform-origin:0 4.33px">15</div>
<div class="a" style="left:177.35px;width:100px;text-align:center;top:415.77px;font-size:7px;font-weight:normal;color:#555;transform:scale(1.0,1.12);transform-origin:0 4.33px">16</div>
<div class="a" style="left:190.89px;width:100px;text-align:center;top:415.77px;font-size:7px;font-weight:normal;color:#555;transform:scale(1.0,1.12);transform-origin:0 4.33px">17</div>
<div class="a" style="left:204.43px;width:100px;text-align:center;top:415.77px;font-size:7px;font-weight:normal;color:#555;transform:scale(1.0,1.12);transform-origin:0 4.33px">18</div>
<div class="a" style="left:3.90px;top:355.57px;font-size:7px;font-weight:normal;color:#666;transform:scale(1.0,1.12);transform-origin:0 4.33px"><i>产</i><i>量</i></div>
<div class="a" style="left:-191.00px;width:200px;text-align:right;top:370.07px;font-size:7px;font-weight:normal;color:#555;transform:scale(1.0,1.12);transform-origin:0 4.33px">4k</div>
<div class="a" style="left:-192.00px;width:200px;text-align:right;top:406.47px;font-size:7px;font-weight:normal;color:#555;transform:scale(1.0,1.12);transform-origin:0 4.33px">0</div>
<div class="a" style="left:193.50px;top:353.94px;font-size:7.4px;font-weight:bold;color:#333;transform:scale(1.0,1.12);transform-origin:0 4.46px;-webkit-text-stroke:0.1px currentColor"><i>产</i><i>量</i></div>
<div class="a" style="left:234.00px;top:353.94px;font-size:7.4px;font-weight:bold;color:#333;transform:scale(1.0,1.12);transform-origin:0 4.46px;-webkit-text-stroke:0.1px currentColor"><i>平</i><i>均</i><i>值</i></div>
<div class="a" style="left:250.73px;width:100px;text-align:center;top:415.77px;font-size:7px;font-weight:normal;color:#555;transform:scale(1.0,1.12);transform-origin:0 4.33px">1</div>
<div class="a" style="left:263.98px;width:100px;text-align:center;top:415.77px;font-size:7px;font-weight:normal;color:#555;transform:scale(1.0,1.12);transform-origin:0 4.33px">2</div>
<div class="a" style="left:277.23px;width:100px;text-align:center;top:415.77px;font-size:7px;font-weight:normal;color:#555;transform:scale(1.0,1.12);transform-origin:0 4.33px">3</div>
<div class="a" style="left:290.48px;width:100px;text-align:center;top:415.77px;font-size:7px;font-weight:normal;color:#555;transform:scale(1.0,1.12);transform-origin:0 4.33px">4</div>
<div class="a" style="left:303.73px;width:100px;text-align:center;top:415.77px;font-size:7px;font-weight:normal;color:#555;transform:scale(1.0,1.12);transform-origin:0 4.33px">5</div>
<div class="a" style="left:316.98px;width:100px;text-align:center;top:415.77px;font-size:7px;font-weight:normal;color:#555;transform:scale(1.0,1.12);transform-origin:0 4.33px">6</div>
<div class="a" style="left:330.22px;width:100px;text-align:center;top:415.77px;font-size:7px;font-weight:normal;color:#555;transform:scale(1.0,1.12);transform-origin:0 4.33px">7</div>
<div class="a" style="left:343.47px;width:100px;text-align:center;top:415.77px;font-size:7px;font-weight:normal;color:#555;transform:scale(1.0,1.12);transform-origin:0 4.33px">8</div>
<div class="a" style="left:356.72px;width:100px;text-align:center;top:415.77px;font-size:7px;font-weight:normal;color:#555;transform:scale(1.0,1.12);transform-origin:0 4.33px">9</div>
<div class="a" style="left:369.97px;width:100px;text-align:center;top:415.77px;font-size:7px;font-weight:normal;color:#555;transform:scale(1.0,1.12);transform-origin:0 4.33px">10</div>
<div class="a" style="left:383.22px;width:100px;text-align:center;top:415.77px;font-size:7px;font-weight:normal;color:#555;transform:scale(1.0,1.12);transform-origin:0 4.33px">11</div>
<div class="a" style="left:396.47px;width:100px;text-align:center;top:415.77px;font-size:7px;font-weight:normal;color:#555;transform:scale(1.0,1.12);transform-origin:0 4.33px">12</div>
<div class="a" style="left:409.72px;width:100px;text-align:center;top:415.77px;font-size:7px;font-weight:normal;color:#555;transform:scale(1.0,1.12);transform-origin:0 4.33px">13</div>
<div class="a" style="left:422.97px;width:100px;text-align:center;top:415.77px;font-size:7px;font-weight:normal;color:#555;transform:scale(1.0,1.12);transform-origin:0 4.33px">14</div>
<div class="a" style="left:436.22px;width:100px;text-align:center;top:415.77px;font-size:7px;font-weight:normal;color:#555;transform:scale(1.0,1.12);transform-origin:0 4.33px">15</div>
<div class="a" style="left:449.47px;width:100px;text-align:center;top:415.77px;font-size:7px;font-weight:normal;color:#555;transform:scale(1.0,1.12);transform-origin:0 4.33px">16</div>
<div class="a" style="left:462.72px;width:100px;text-align:center;top:415.77px;font-size:7px;font-weight:normal;color:#555;transform:scale(1.0,1.12);transform-origin:0 4.33px">17</div>
<div class="a" style="left:475.97px;width:100px;text-align:center;top:415.77px;font-size:7px;font-weight:normal;color:#555;transform:scale(1.0,1.12);transform-origin:0 4.33px">18</div>
<div class="a" style="left:280.40px;top:355.57px;font-size:7px;font-weight:normal;color:#666;transform:scale(1.0,1.12);transform-origin:0 4.33px"><i>成</i><i>本</i></div>
<div class="a" style="left:85.50px;width:200px;text-align:right;top:370.07px;font-size:7px;font-weight:normal;color:#555;transform:scale(1.0,1.12);transform-origin:0 4.33px">10k</div>
<div class="a" style="left:86.50px;width:200px;text-align:right;top:406.47px;font-size:7px;font-weight:normal;color:#555;transform:scale(1.0,1.12);transform-origin:0 4.33px">0</div>
<div class="a" style="left:466.00px;top:353.94px;font-size:7.4px;font-weight:bold;color:#333;transform:scale(1.0,1.12);transform-origin:0 4.46px;-webkit-text-stroke:0.1px currentColor"><i>成</i><i>本</i></div>
<div class="a" style="left:506.00px;top:353.94px;font-size:7.4px;font-weight:bold;color:#333;transform:scale(1.0,1.12);transform-origin:0 4.46px;-webkit-text-stroke:0.1px currentColor"><i>平</i><i>均</i><i>值</i></div>
<div class="a" style="left:530.52px;width:100px;text-align:center;top:415.77px;font-size:7px;font-weight:normal;color:#555;transform:scale(1.0,1.12);transform-origin:0 4.33px">1</div>
<div class="a" style="left:543.35px;width:100px;text-align:center;top:415.77px;font-size:7px;font-weight:normal;color:#555;transform:scale(1.0,1.12);transform-origin:0 4.33px">2</div>
<div class="a" style="left:556.18px;width:100px;text-align:center;top:415.77px;font-size:7px;font-weight:normal;color:#555;transform:scale(1.0,1.12);transform-origin:0 4.33px">3</div>
<div class="a" style="left:569.02px;width:100px;text-align:center;top:415.77px;font-size:7px;font-weight:normal;color:#555;transform:scale(1.0,1.12);transform-origin:0 4.33px">4</div>
<div class="a" style="left:581.85px;width:100px;text-align:center;top:415.77px;font-size:7px;font-weight:normal;color:#555;transform:scale(1.0,1.12);transform-origin:0 4.33px">5</div>
<div class="a" style="left:594.68px;width:100px;text-align:center;top:415.77px;font-size:7px;font-weight:normal;color:#555;transform:scale(1.0,1.12);transform-origin:0 4.33px">6</div>
<div class="a" style="left:607.52px;width:100px;text-align:center;top:415.77px;font-size:7px;font-weight:normal;color:#555;transform:scale(1.0,1.12);transform-origin:0 4.33px">7</div>
<div class="a" style="left:620.35px;width:100px;text-align:center;top:415.77px;font-size:7px;font-weight:normal;color:#555;transform:scale(1.0,1.12);transform-origin:0 4.33px">8</div>
<div class="a" style="left:633.18px;width:100px;text-align:center;top:415.77px;font-size:7px;font-weight:normal;color:#555;transform:scale(1.0,1.12);transform-origin:0 4.33px">9</div>
<div class="a" style="left:646.02px;width:100px;text-align:center;top:415.77px;font-size:7px;font-weight:normal;color:#555;transform:scale(1.0,1.12);transform-origin:0 4.33px">10</div>
<div class="a" style="left:658.85px;width:100px;text-align:center;top:415.77px;font-size:7px;font-weight:normal;color:#555;transform:scale(1.0,1.12);transform-origin:0 4.33px">11</div>
<div class="a" style="left:671.68px;width:100px;text-align:center;top:415.77px;font-size:7px;font-weight:normal;color:#555;transform:scale(1.0,1.12);transform-origin:0 4.33px">12</div>
<div class="a" style="left:684.52px;width:100px;text-align:center;top:415.77px;font-size:7px;font-weight:normal;color:#555;transform:scale(1.0,1.12);transform-origin:0 4.33px">13</div>
<div class="a" style="left:697.35px;width:100px;text-align:center;top:415.77px;font-size:7px;font-weight:normal;color:#555;transform:scale(1.0,1.12);transform-origin:0 4.33px">14</div>
<div class="a" style="left:710.18px;width:100px;text-align:center;top:415.77px;font-size:7px;font-weight:normal;color:#555;transform:scale(1.0,1.12);transform-origin:0 4.33px">15</div>
<div class="a" style="left:723.02px;width:100px;text-align:center;top:415.77px;font-size:7px;font-weight:normal;color:#555;transform:scale(1.0,1.12);transform-origin:0 4.33px">16</div>
<div class="a" style="left:735.85px;width:100px;text-align:center;top:415.77px;font-size:7px;font-weight:normal;color:#555;transform:scale(1.0,1.12);transform-origin:0 4.33px">17</div>
<div class="a" style="left:748.68px;width:100px;text-align:center;top:415.77px;font-size:7px;font-weight:normal;color:#555;transform:scale(1.0,1.12);transform-origin:0 4.33px">18</div>
<div class="a" style="left:546.20px;top:355.57px;font-size:7px;font-weight:normal;color:#666;transform:scale(1.0,1.12);transform-origin:0 4.33px"><i>单</i><i>产</i><i>成</i><i>本</i></div>
<div class="a" style="left:366.00px;width:200px;text-align:right;top:370.07px;font-size:7px;font-weight:normal;color:#555;transform:scale(1.0,1.12);transform-origin:0 4.33px">20</div>
<div class="a" style="left:366.00px;width:200px;text-align:right;top:406.47px;font-size:7px;font-weight:normal;color:#555;transform:scale(1.0,1.12);transform-origin:0 4.33px">0</div>
<div class="a" style="left:723.40px;top:353.94px;font-size:7.4px;font-weight:bold;color:#333;transform:scale(1.0,1.12);transform-origin:0 4.46px;-webkit-text-stroke:0.1px currentColor"><i>单</i><i>产</i><i>成</i><i>本</i></div>
<div class="a" style="left:778.30px;top:353.94px;font-size:7.4px;font-weight:bold;color:#333;transform:scale(1.0,1.12);transform-origin:0 4.46px;-webkit-text-stroke:0.1px currentColor"><i>平</i><i>均</i><i>值</i></div>
</body></html>
